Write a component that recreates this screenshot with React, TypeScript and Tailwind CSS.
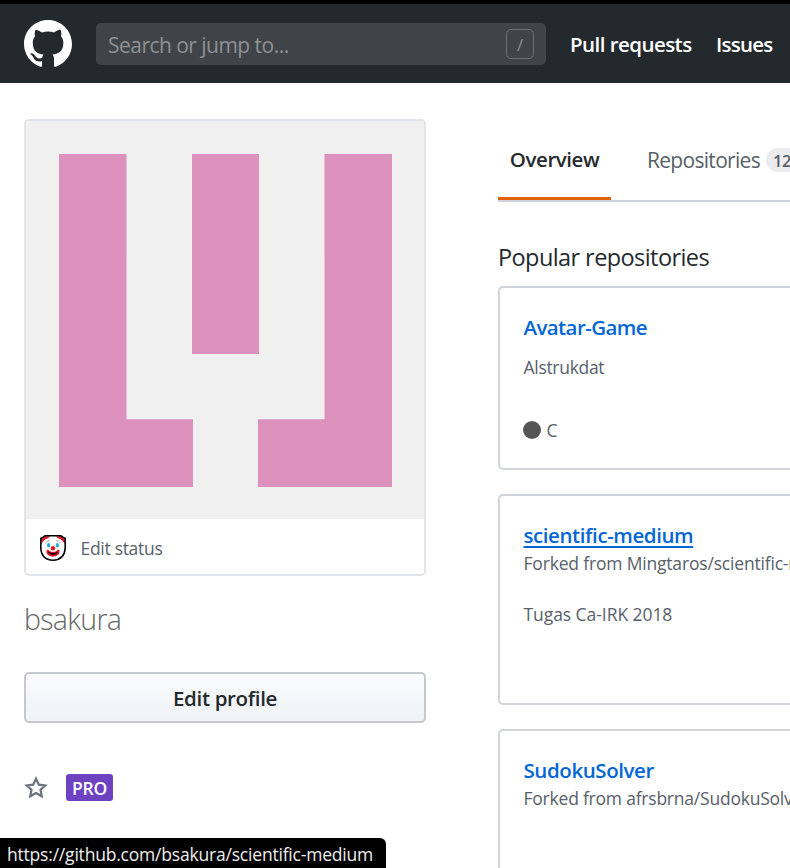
import type { ReactNode } from "react";

const TABS = "flex h-[119px] border-b-2 border-[#d1d5da]";

function Octocat() {
  return (
    <svg className="size-12 shrink-0" viewBox="0 0 16 16" fill="#fff" fillRule="evenodd">
      <path d="M8 0C3.58 0 0 3.58 0 8c0 3.54 2.29 6.53 5.47 7.59.4.07.55-.17.55-.38 0-.19-.01-.82-.01-1.49-2.01.37-2.53-.49-2.69-.94-.09-.23-.48-.94-.82-1.13-.28-.15-.68-.52-.01-.53.63-.01 1.08.58 1.23.82.72 1.21 1.87.87 2.33.66.07-.52.28-.87.51-1.07-1.78-.2-3.64-.89-3.64-3.95 0-.87.31-1.59.82-2.15-.08-.2-.36-1.02.08-2.12 0 0 .67-.21 2.2.82.64-.18 1.32-.27 2-.27.68 0 1.36.09 2 .27 1.53-1.04 2.2-.82 2.2-.82.44 1.1.16 1.92.08 2.12.51.56.82 1.27.82 2.15 0 3.07-1.87 3.75-3.65 3.95.29.25.54.73.54 1.48 0 1.07-.01 1.93-.01 2.2 0 .21.15.46.55.38A8.013 8.013 0 0016 8c0-4.42-3.58-8-8-8z" />
    </svg>
  );
}

function Identicon() {
  return (
    <svg className="block h-[398px] w-[398px]" viewBox="0 0 398 398">
      <rect width="398" height="398" fill="#f0f0f0" />
      <path
        fill="#dd92bd"
        d="M33 33H100.500V298.300H167V366H33zM166 33H233V233H166zM298.500 33H366V366H232V298.300H298.500z"
      />
    </svg>
  );
}

function Clown() {
  return (
    <svg className="size-[26px] shrink-0" viewBox="0 0 26 26">
      <path d="M5 .8H21Q22.500 2 25.200 3.500V13Q24.500 24.800 13 25.200Q1.500 24.800.8 13V3.500Q3.500 2 5 .8z" fill="#fff" />
      <path d="M1.200 9V4Q3.500 3 5 1.200H10Q8.500 3.500 5.500 4.300Q3.500 5.500 1.200 9zM24.800 9V4Q22.500 3 21 1.200H16Q17.500 3.500 20.500 4.300Q22.500 5.500 24.800 9z" fill="#e81224" />
      <path d="M5 .8H21Q22.500 2 25.200 3.500V13Q24.500 24.800 13 25.200Q1.500 24.800.8 13V3.500Q3.500 2 5 .8z" fill="none" stroke="#000" strokeWidth="1.600" />
      <path d="M5.500 8.500Q7 5.500 9.800 5.400M20.500 8.500Q19 5.500 16.200 5.400" fill="none" stroke="#c4c4c4" strokeWidth="1.200" />
      <ellipse cx="8.600" cy="10.300" rx="1.500" ry="2.200" fill="#26a9d0" />
      <ellipse cx="17.400" cy="10.300" rx="1.500" ry="2.200" fill="#26a9d0" />
      <circle cx="13" cy="13.200" r="2.200" fill="#e81224" />
      <path d="M6.500 15.300Q8 14 9.500 16Q13 17.800 16.500 16Q18 14 19.500 15.300Q20.300 21 13 21.700Q5.700 21 6.500 15.300z" fill="#e81224" />
      <path d="M8 16.500Q13 19.500 18 16.500Q17.300 19.600 13 19.800Q8.700 19.600 8 16.500z" fill="#000" />
    </svg>
  );
}

function Star() {
  return (
    <svg className="h-6 w-6 shrink-0" viewBox="0 0 24 24" fill="none" stroke="#6a737d" strokeWidth="2.200">
      <path d="M12 2.700L14.800 8.700L21.300 9.500L16.500 13.700L17.800 20.300L12 17L6.200 20.300L7.500 13.700L2.700 9.500L9.200 8.700z" />
    </svg>
  );
}

function Card({ title, height, underline, children }: { title: ReactNode; height: string; underline?: boolean; children: ReactNode }) {
  return (
    <article className={`${height} mb-6 w-[440px] shrink-0 rounded-[5px] border-2 border-[#d1d5da] bg-white pt-[25px] pl-[23.500px] text-[17.500px] tracking-[-0.200px] text-[#586069]`}>
      <h3 className="flex h-7 items-center text-[20.500px] leading-7 font-semibold tracking-[-0.420px] text-[#0366d6]">
        <a className={underline ? "underline decoration-2 underline-offset-[3px]" : ""}>{title}</a>
      </h3>
      {children}
    </article>
  );
}

export default function App() {
  return (
    <div className="h-[868px] w-[790px] overflow-hidden bg-white font-['Open_Sans','Noto_Sans',sans-serif] whitespace-nowrap text-[#24292e]">
      <header className="flex h-[83px] items-center border-t-4 border-black bg-[#24292e] pl-6">
        <Octocat />
        <div className="ml-6 flex h-[42px] w-[450px] shrink-0 items-center justify-between rounded-[5px] bg-[#404448] pr-3 pl-3 text-[21px] text-[#8e9193]">
          <span className="pt-[5px] tracking-[-0.530px]">Search or jump to...</span>
          <span className="flex h-[30px] w-7 items-center justify-center rounded-[5px] border border-[#6d7174] pt-0.5 text-[17px]">/</span>
        </div>
        <nav className="ml-6 flex gap-6 pt-0.5 text-[20.500px] font-semibold text-white">
          <a className="w-[122px] tracking-[-0.550px]">Pull requests</a>
          <a className="tracking-[-0.750px]">Issues</a>
        </nav>
      </header>

      <div className="flex">
        <aside className="ml-6 w-[402px] shrink-0 pt-9">
          <section className="h-[457px] overflow-hidden rounded-[5px] border-2 border-[#e1e4e8]">
            <Identicon />
            <div className="flex h-[58px] items-center pl-3.5">
              <Clown />
              <span className="ml-[14.500px] pt-px text-[17.500px] tracking-[-0.300px] text-[#586069]">Edit status</span>
            </div>
          </section>
          <h1 className="mt-[23px] h-10 text-[28.500px] leading-10 font-light tracking-[-0.700px] text-[#666]">bsakura</h1>
          <button className="mt-[33px] flex h-[51px] w-full items-center justify-center rounded-[5px] border-2 border-[#c5c8cc] bg-linear-to-b from-[#fafbfc] to-[#eff3f6] text-[20.500px] font-semibold">
            <span className="pt-0.5 tracking-[-0.350px]">Edit profile</span>
          </button>
          <div className="mt-[51px] flex h-[27px] items-center">
            <Star />
            <span className="ml-[18px] flex h-[27px] w-[47px] items-center justify-center rounded-[3px] bg-[#6f42c1] pt-0.5 text-[17.500px] font-semibold tracking-[-0.200px] text-white">PRO</span>
          </div>
        </aside>

        <main className="ml-[72px] w-[292px] shrink-0">
          <nav className={TABS}>
            <a className="flex w-[113px] shrink-0 justify-center border-b-3 border-[#e36209] pt-[62px] text-[20.500px] leading-7 font-semibold tracking-[-0.450px]">Overview</a>
            <a className="flex pt-[63px] pl-9 text-[21px] leading-7 text-[#586069]">
              <span className="w-[119px] shrink-0 tracking-[-0.700px]">Repositories</span>
              <span className="mt-0.5 flex h-6 w-10 shrink-0 items-center rounded-full bg-[#ececee] pt-px pl-[7px] text-[16.500px] font-semibold tracking-[-0.500px]">12</span>
            </a>
          </nav>
          <h2 className="mt-[39px] h-[33px] text-[23.500px] leading-8 tracking-[-0.580px]">Popular repositories</h2>
          <div className="mt-3 flex flex-col">
            <Card title={<span className="tracking-[-0.600px]">Avatar-Game</span>} height="h-[184px]">
              <p className="mt-3 leading-7 tracking-[-0.300px]">Alstrukdat</p>
              <div className="-ml-px mt-[35px] flex h-7 items-center">
                <span className="size-[18px] rounded-full bg-[#555]" />
                <span className="ml-1.5">C</span>
              </div>
            </Card>
            <Card title="scientific-medium" height="h-[211px]" underline>
              <p className="leading-7 tracking-[-0.180px]">Forked from Mingtaros/scientific-medium</p>
              <p className="mt-[23px] leading-7 tracking-[-0.060px]">Tugas Ca-IRK 2018</p>
            </Card>
            <Card title="SudokuSolver" height="h-[211px]">
              <p className="leading-7 tracking-[-0.220px]">Forked from afrsbrna/SudokuSolver</p>
            </Card>
          </div>
        </main>
      </div>

      <div className="fixed bottom-0 left-0 flex h-[30px] w-[386px] items-center rounded-tr-[6px] bg-black pt-0.5 pl-[7px] text-[17.500px] tracking-[-0.200px] text-[#eee]">
        https://github.com/bsakura/scientific-medium
      </div>
    </div>
  );
}
